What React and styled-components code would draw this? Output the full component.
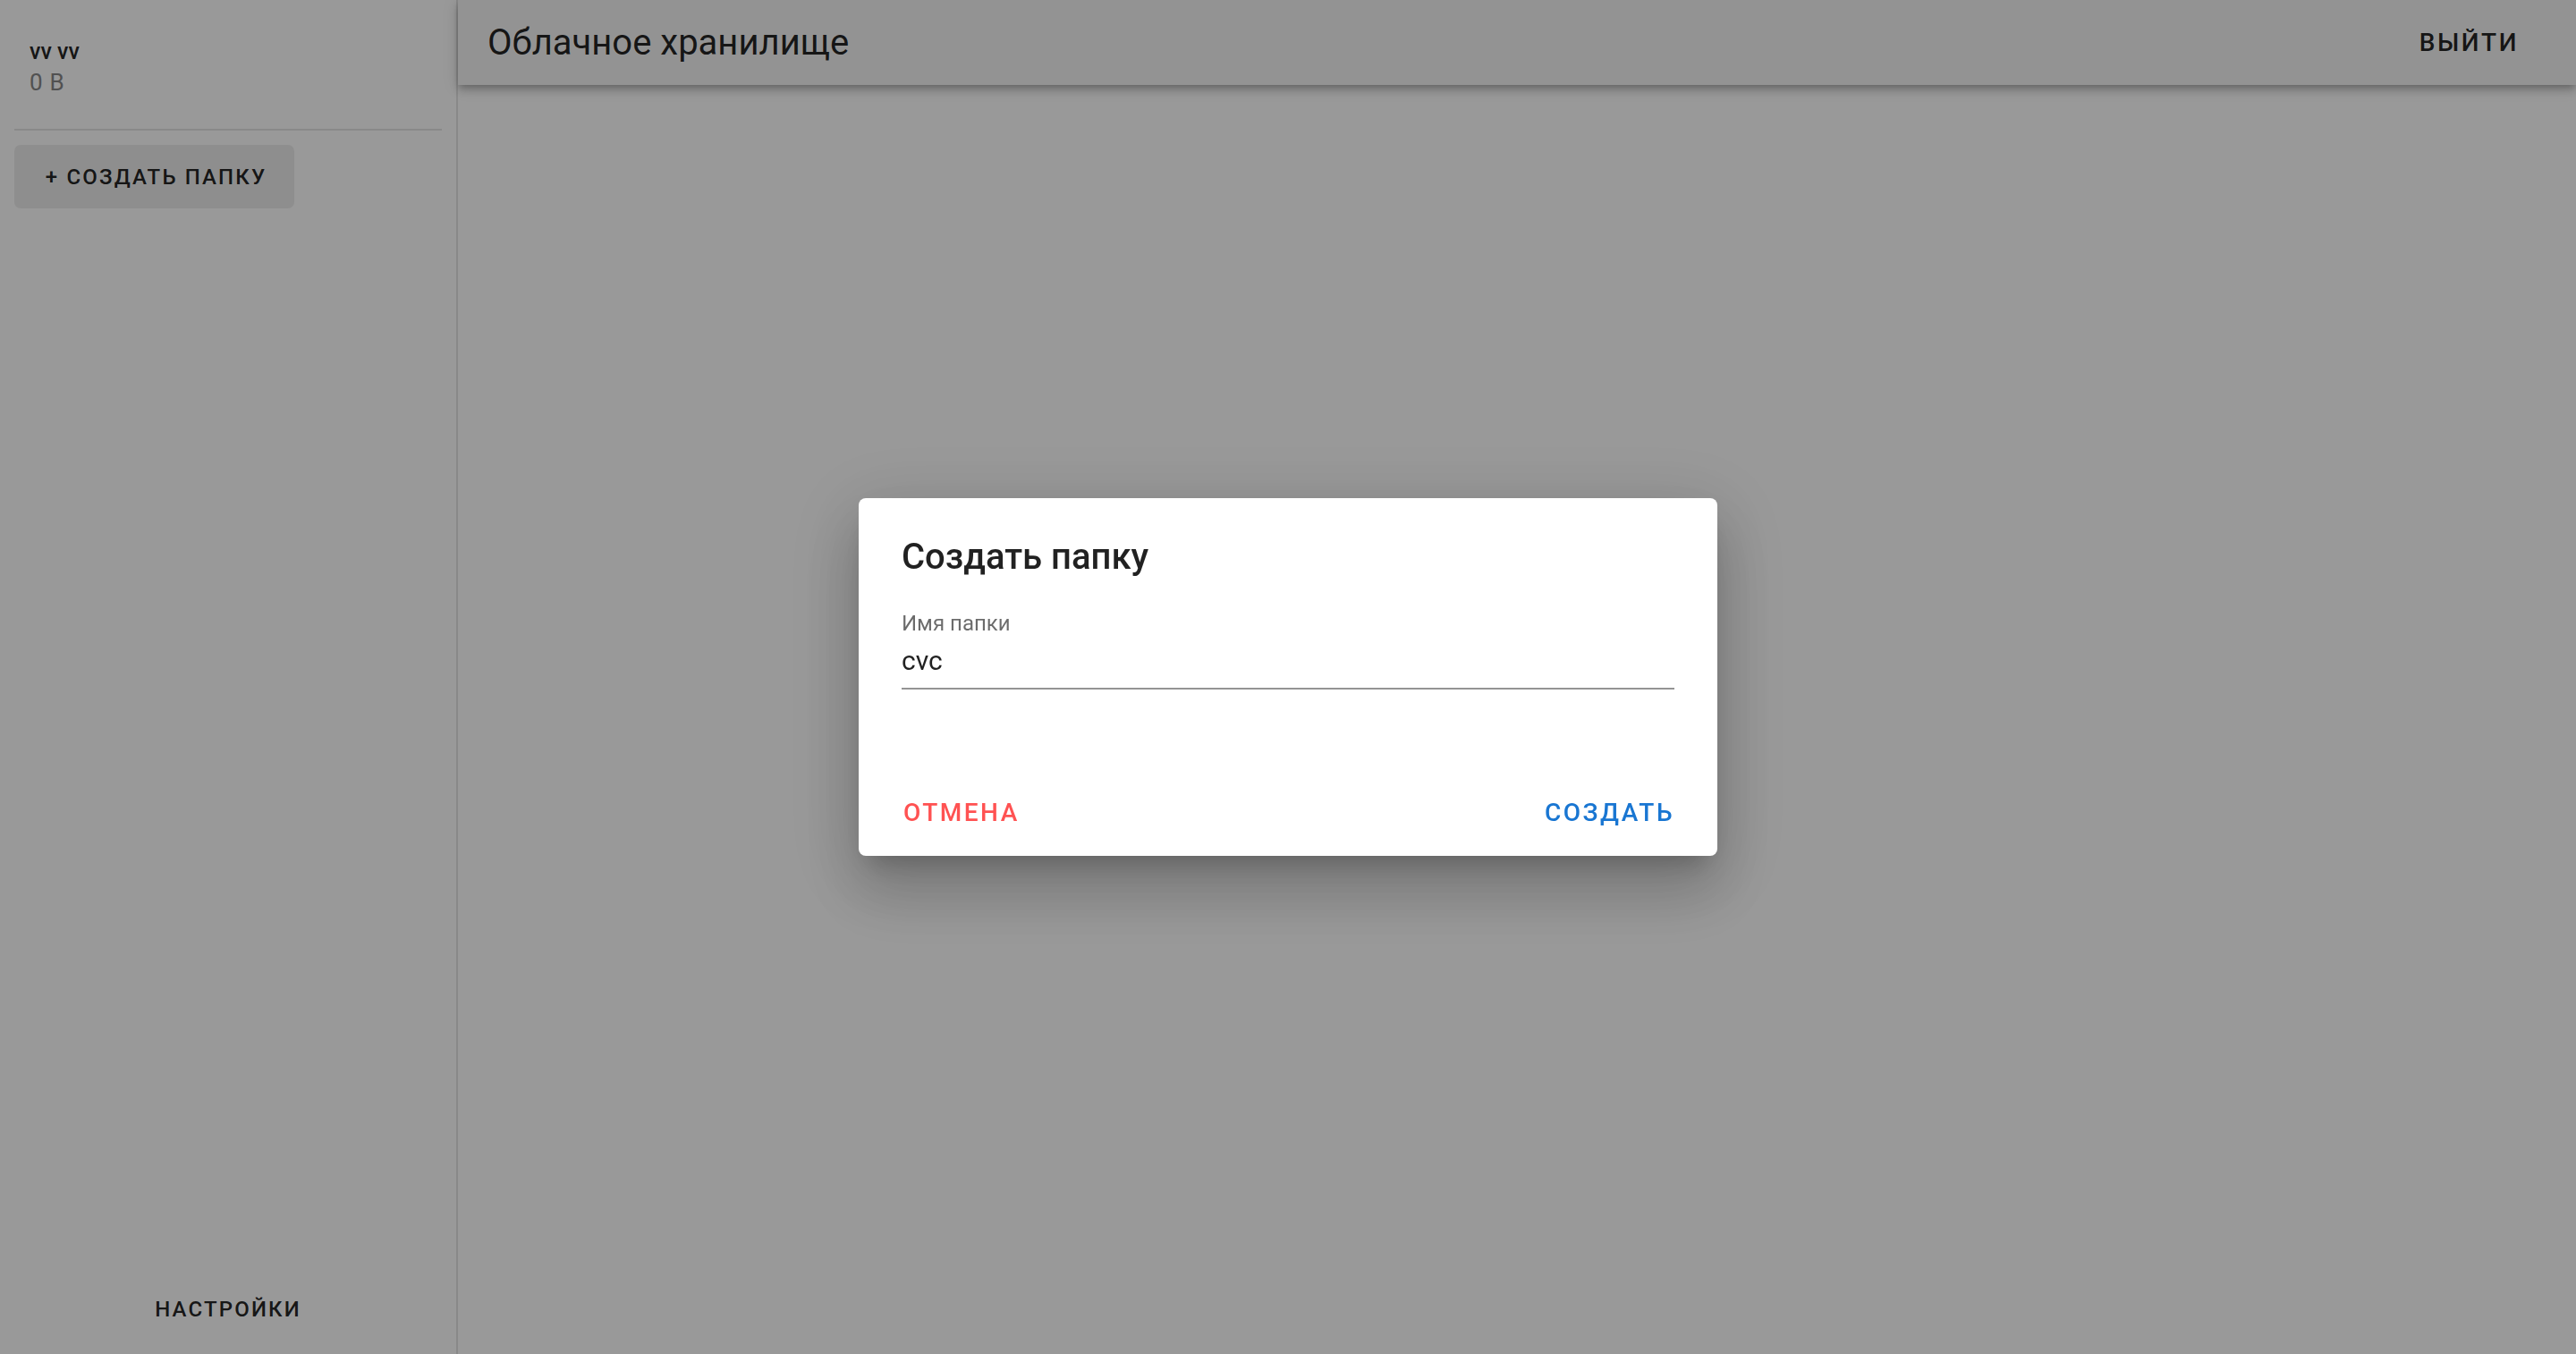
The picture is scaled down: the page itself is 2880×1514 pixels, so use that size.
import styled, { createGlobalStyle } from "styled-components";

const GlobalStyle = createGlobalStyle`
  html, body {
    margin: 0;
    padding: 0;
    height: 100%;
  }
  body {
    font-family: Roboto, "Liberation Sans", sans-serif;
    background: #fff;
    color: rgba(0, 0, 0, 0.87);
  }
  * {
    box-sizing: border-box;
  }
`

const Layout = styled.div`
  display: flex;
  height: 100vh;
  width: 100vw;
  overflow: hidden;
`

// left column
const Sidebar = styled.aside`
  width: 512px;
  flex-shrink: 0;
  display: flex;
  flex-direction: column;
  padding: 0 16px;
  background: #fff;
  border-right: 2px solid rgba(0, 0, 0, 0.1);
`
const UserBlock = styled.div`
  padding: 40px 17px 0;
  height: 144px;
`
const UserName = styled.div`
  font-size: 25px;
  line-height: 35px;
  font-weight: 500;
  color: rgba(0, 0, 0, 0.87);
`
const UserSize = styled.div`
  font-size: 26px;
  line-height: 35px;
  letter-spacing: 0.03em;
  color: #888;
`
const Divider = styled.hr`
  margin: 0;
  border: none;
  border-top: 2px solid rgba(0, 0, 0, 0.1);
`
const TextButton = styled.button`
  display: inline-flex;
  align-items: center;
  justify-content: center;
  height: 71px;
  padding: 0 34px;
  border: none;
  border-radius: 7px;
  background: ${p => p.filled ? '#ededed' : 'transparent'};
  color: ${p => p.color || 'rgba(0, 0, 0, 0.87)'};
  font-family: Roboto, "Liberation Sans", sans-serif;
  font-size: ${p => p.size || 24}px;
  font-weight: 500;
  letter-spacing: 0.09em;
  text-transform: uppercase;
  white-space: nowrap;
  cursor: pointer;
`
const CreateButton = styled(TextButton)`
  align-self: flex-start;
  width: 313px;
  padding: 0 0 0 4px;
  margin-top: 16px;
`
const Spacer = styled.div`
  flex: 1;
`
const SettingsButton = styled(TextButton)`
  width: 100%;
  margin-bottom: 15px;
`

// right column
const Main = styled.main`
  flex: 1;
  display: flex;
  flex-direction: column;
  background: #fff;
`
const Header = styled.header`
  height: 95px;
  display: flex;
  align-items: center;
  justify-content: space-between;
  padding: 0 30px 0 33px;
  background: #f6f6f6;
  box-shadow: 0 3px 7px -2px rgba(0,0,0,.2), 0 7px 9px 0 rgba(0,0,0,.14), 0 2px 18px 0 rgba(0,0,0,.12);
  z-index: 1;
`
const Title = styled.h1`
  margin: 0;
  font-size: 40px;
  line-height: 1.2;
  font-weight: 400;
  color: rgba(0, 0, 0, 0.87);
`
const LogoutButton = styled(TextButton)`
  height: 64px;
`

// modal
const Backdrop = styled.div`
  position: fixed;
  inset: 0;
  background: rgba(0, 0, 0, 0.4);
  display: flex;
  align-items: center;
  justify-content: center;
  z-index: 10;
`
const Dialog = styled.div`
  width: 960px;
  height: 400px;
  background: #fff;
  border-radius: 8px;
  display: flex;
  flex-direction: column;
  padding: 42px 48px 24px;
  box-shadow: 0 19px 26px -12px rgba(0,0,0,.2), 0 42px 66px 5px rgba(0,0,0,.14), 0 16px 80px 14px rgba(0,0,0,.12);
`
const DialogTitle = styled.h2`
  margin: 0;
  font-size: 40px;
  line-height: 48px;
  font-weight: 500;
  color: rgba(0, 0, 0, 0.87);
`
const Field = styled.label`
  display: flex;
  flex-direction: column;
  margin-top: 36px;
`
const FieldLabel = styled.span`
  font-size: 24px;
  line-height: 29px;
  color: rgba(0, 0, 0, 0.58);
`
const FieldInput = styled.input`
  margin-top: 9px;
  padding: 0 0 12px;
  border: none;
  border-bottom: 2px solid rgba(0, 0, 0, 0.42);
  outline: none;
  background: transparent;
  font-family: Roboto, "Liberation Sans", sans-serif;
  font-size: 30px;
  line-height: 36px;
  color: rgba(0, 0, 0, 0.87);
`
const Actions = styled.div`
  margin-top: auto;
  display: flex;
  justify-content: space-between;
  align-items: center;
`
const ActionButton = styled(TextButton)`
  height: 49px;
  padding: 0 0 0 2px;
`

export default function App() {
  return (
    <>
      <GlobalStyle />
      <Layout>
        <Sidebar>
          <UserBlock>
            <UserName>vv vv</UserName>
            <UserSize>0 B</UserSize>
          </UserBlock>
          <Divider />
          <CreateButton filled>+ Создать папку</CreateButton>
          <Spacer />
          <SettingsButton>Настройки</SettingsButton>
        </Sidebar>
        <Main>
          <Header>
            <Title>Облачное хранилище</Title>
            <LogoutButton size={28}>Выйти</LogoutButton>
          </Header>
        </Main>
      </Layout>
      <Backdrop>
        <Dialog>
          <DialogTitle>Создать папку</DialogTitle>
          <Field>
            <FieldLabel>Имя папки</FieldLabel>
            <FieldInput defaultValue="cvc" />
          </Field>
          <Actions>
            <ActionButton size={28} color="#ff5252">Отмена</ActionButton>
            <ActionButton size={28} color="#1976d2">Создать</ActionButton>
          </Actions>
        </Dialog>
      </Backdrop>
    </>
  );
}
